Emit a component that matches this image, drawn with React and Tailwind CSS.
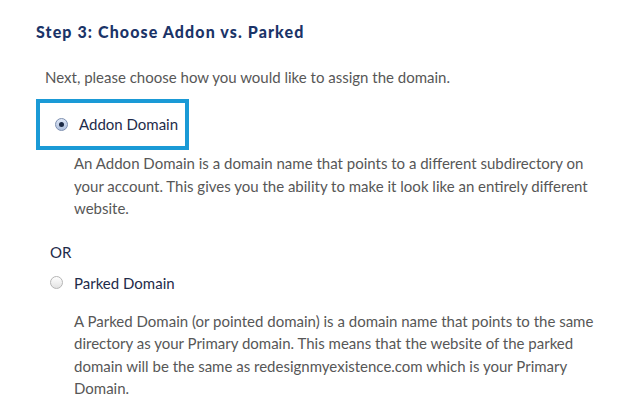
import React from 'react';

function Radio({ checked }) {
  return (
    <span
      className={
        'flex h-[13px] w-[13px] shrink-0 items-center justify-center rounded-full border ' +
        (checked
          ? 'border-[#7d8fb0] bg-gradient-to-b from-[#dfe8f7] to-[#aebfdc]'
          : 'border-[#b5b5b5] bg-gradient-to-b from-[#ffffff] to-[#e2e2e2]')
      }
    >
      {checked && <span className="h-[5px] w-[5px] rounded-full bg-[#1c2a44]" />}
    </span>
  );
}

export default function App() {
  return (
    <div className="min-h-[418px] w-[622px] bg-white pl-[36px] pt-[22px] font-['Lato',sans-serif]">
      <h2 className="text-[16px] font-black leading-[20px] tracking-[1.1px] text-[#1b3468]">
        Step 3: Choose Addon vs. Parked
      </h2>

      <p className="mt-[25px] pl-[9px] text-[15px] leading-[20px] text-[#575757]">
        Next, please choose how you would like to assign the domain.
      </p>

      <div className="mt-[12px] flex h-[51px] w-[153px] items-center gap-[11px] border-4 border-[#1a9ad6] pl-[15px]">
        <Radio checked />
        <span className="text-[15px] text-[#1e2b4a]">Addon Domain</span>
      </div>

      <p className="mt-[2px] w-[568px] pl-[38px] text-[15px] leading-[22.5px] text-[#575757]">
        An Addon Domain is a domain name that points to a different subdirectory on your account. This
        gives you the ability to make it look like an entirely different website.
      </p>

      <p className="mt-[22px] pl-[14px] text-[15px] leading-[20px] text-[#1e2b4a]">OR</p>

      <div className="mt-[11px] flex items-center gap-[11px] pl-[14px]">
        <Radio />
        <span className="text-[15px] leading-[20px] text-[#1e2b4a]">Parked Domain</span>
      </div>

      <p className="mt-[17px] w-[560px] pl-[38px] text-[15px] leading-[22.5px] text-[#575757]">
        A Parked Domain (or pointed domain) is a domain name that points to the same directory as your
        Primary domain. This means that the website of the parked domain will be the same as
        redesignmyexistence.com which is your Primary Domain.
      </p>
    </div>
  );
}
